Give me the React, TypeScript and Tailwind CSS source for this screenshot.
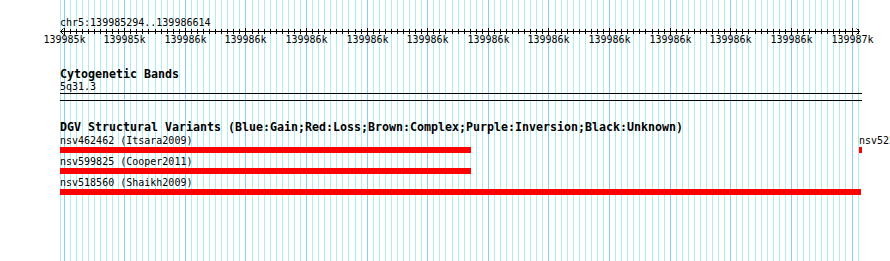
import React from 'react';

const START = 139985294;
const END = 139986614;
const LEFT = 60;
const WIDTH = 800;
const pxPerBp = WIDTH / (END - START);

const tickX = (j: number) => Math.round(LEFT + (139985300 - START) * pxPerBp + j * 10 * pxPerBp);

const ticks: number[] = [];
for (let j = 0; tickX(j) <= LEFT + WIDTH; j++) ticks.push(j);

const LABELS = [
  '139985k', '139985k', '139986k', '139986k', '139986k', '139986k', '139986k',
  '139986k', '139986k', '139986k', '139986k', '139986k', '139986k', '139987k',
];

type Feature = { name: string; left: number; width: number };

const ROWS: Feature[][] = [
  [
    { name: 'nsv462462 (Itsara2009)', left: 0, width: 411 },
    { name: 'nsv523133 (Shaikh2009)', left: 799, width: 3 },
  ],
  [{ name: 'nsv599825 (Cooper2011)', left: 0, width: 411 }],
  [{ name: 'nsv518560 (Shaikh2009)', left: 0, width: 801 }],
];

function Grid() {
  return (
    <svg className="absolute inset-0" width={890} height={261} shapeRendering="crispEdges">
      <rect x={60} y={0} width={1} height={261} fill="#afeeee" />
      {ticks.map(j => (
        <rect
          key={j}
          x={tickX(j)}
          y={0}
          width={1}
          height={261}
          fill={j % 10 === 0 ? '#87cefa' : '#afeeee'}
        />
      ))}
    </svg>
  );
}

function Ruler() {
  return (
    <svg width={890} height={18} className="block -ml-[60px]" shapeRendering="crispEdges">
      <rect x={60} y={4} width={800} height={1} fill="#000" />
      {ticks.map(j =>
        j % 10 === 0
          ? <rect key={j} x={tickX(j)} y={1} width={1} height={7} fill="#000" />
          : <rect key={j} x={tickX(j)} y={2} width={1} height={5} fill="#000" />
      )}
      <path d="M63.5,1.5 L60.5,4.5 L63.5,7.5" fill="none" stroke="#000" strokeWidth={1} shapeRendering="auto" />
      <path d="M856.5,1.5 L859.5,4.5 L856.5,7.5" fill="none" stroke="#000" strokeWidth={1} shapeRendering="auto" />
      {LABELS.map((l, i) => (
        <text
          key={i}
          x={tickX(i * 10) + 0.5}
          y={16}
          textAnchor="middle"
          fontSize={10}
          fontFamily="'DejaVu Sans Mono', monospace"
          fill="#000"
        >
          {l}
        </text>
      ))}
    </svg>
  );
}

function TrackRow({ features }: { features: Feature[] }) {
  return (
    <div className="relative h-[19px] mb-[2px] w-[800px]">
      {features.map(f => (
        <div key={f.name} className="absolute top-0" style={{ left: f.left }}>
          <div className="h-[13px] leading-[13px] text-[10px] whitespace-nowrap">{f.name}</div>
          <div className="h-[6px] bg-[#ff0000]" style={{ width: f.width }} />
        </div>
      ))}
    </div>
  );
}

export default function App() {
  return (
    <div className="relative w-[890px] h-[261px] overflow-hidden bg-white text-black font-['DejaVu_Sans_Mono',monospace]">
      <Grid />
      <div className="relative pl-[60px] pt-[16px]">
        <div className="h-[13px] leading-[13px] text-[10px] -mb-[2px]">chr5:139985294..139986614</div>
        <Ruler />

        <div className="mt-[23px] h-[12px] leading-[13px] text-[11.63px] font-bold">Cytogenetic Bands</div>
        <div className="h-[13px] leading-[13px] text-[10px]">5q31.3</div>
        <div className="h-px w-[802px] bg-black" />
        <div className="mt-[6px] h-px w-[802px] bg-black" />

        <div className="mt-[20px] h-[13px] leading-[13px] text-[11.63px] font-bold whitespace-nowrap">
          DGV Structural Variants (Blue:Gain;Red:Loss;Brown:Complex;Purple:Inversion;Black:Unknown)
        </div>
        {ROWS.map((r, i) => <TrackRow key={i} features={r} />)}
      </div>
    </div>
  );
}
